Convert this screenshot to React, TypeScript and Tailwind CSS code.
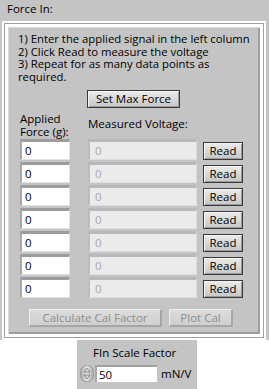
import React from "react";

const font = { fontFamily: '"Open Sans", "Noto Sans", sans-serif' };

function Btn({ label, w, disabled }: { label: string; w: string; disabled?: boolean }) {
  if (disabled) {
    return (
      <div
        className={`${w} h-[18px] flex items-center justify-center text-[11.5px] leading-none text-[#8e8e8e] bg-gradient-to-b from-[#dcdcdc] to-[#cfcfcf] border-t border-l border-[#ececec] border-r-2 border-b-2 border-r-[#a6a6a6] border-b-[#a6a6a6]`}
      >
        {label}
      </div>
    );
  }
  return (
    <div className={`${w} h-[18px] border border-[#3a3a3a] bg-[#3a3a3a]`}>
      <div className="w-full h-full flex items-center justify-center text-[11.5px] leading-none text-black bg-gradient-to-b from-[#ececec] to-[#c6c6c6] shadow-[inset_1px_1px_0_#f6f6f6,inset_-1px_-1px_0_#9a9a9a]">
        {label}
      </div>
    </div>
  );
}

function Row() {
  return (
    <div className="flex items-start h-[23px]">
      <div className="ml-[12px] w-[50px] h-[21px] bg-white border-t-[3px] border-l-[2px] border-t-[#9c9c9c] border-l-[#a8a8a8] border-b border-r border-b-[#e2e2e2] border-r-[#e2e2e2] pl-[3px] text-[11.5px] leading-[17px] text-black">
        0
      </div>
      <div className="ml-[18px] w-[109px] h-[21px] bg-[#ebebeb] border-t-[3px] border-l-[2px] border-t-[#b8b8b8] border-l-[#bcbcbc] border-b border-r border-b-[#dedede] border-r-[#dedede] pl-[5px] text-[11.5px] leading-[17px] text-[#a8a8a8]">
        0
      </div>
      <div className="ml-[6px] mt-[3px]">
        <Btn label="Read" w="w-[40px]" />
      </div>
    </div>
  );
}

export default function App() {
  return (
    <div className="w-[269px] h-[389px] bg-white overflow-hidden text-black" style={font}>
      <div className="h-[21px] bg-[#c4c4c4] pl-[7px] pt-[1px] text-[11.5px] leading-[16px]">Force In:</div>
      <div className="bg-[#c4c4c4] pl-[2px] pr-[3px] h-[319px]">
        <div className="h-full border-2 border-white">
          <div className="h-full border border-[#a0a0a0]">
            <div className="h-full border-[3px] border-white">
              <div className="h-full bg-[#c4c4c4] shadow-[inset_1px_1px_0_#dadada,inset_-2px_-2px_0_#9e9e9e] flex flex-col">
                <div className="pl-[10px] pt-[6px] text-[11.3px] leading-[12.5px] whitespace-nowrap">
                  <div>1) Enter the applied signal in the left column</div>
                  <div>2) Click Read to measure the voltage</div>
                  <div>3) Repeat for as many data points as</div>
                  <div>required.</div>
                </div>
                <div className="ml-[79px] mt-[7px]">
                  <Btn label="Set Max Force" w="w-[93px]" />
                </div>
                <div className="flex h-[27px] mt-[4px] text-[11.5px] leading-[13px]">
                  <div className="ml-[12px] w-[68px]">
                    <div>Applied</div>
                    <div>Force (g):</div>
                  </div>
                  <div className="mt-[5px]">Measured Voltage:</div>
                </div>
                <div className="flex flex-col">
                  {Array.from({ length: 7 }).map((_, i) => (
                    <Row key={i} />
                  ))}
                </div>
                <div className="flex mt-[9px] ml-[21px] gap-[7px]">
                  <Btn label="Calculate Cal Factor" w="w-[133px]" disabled />
                  <Btn label="Plot Cal" w="w-[64px]" disabled />
                </div>
              </div>
            </div>
          </div>
        </div>
      </div>
      <div className="ml-[77px] w-[120px] h-[49px] bg-[#c4c4c4] flex flex-col">
        <div className="pl-[16px] pt-[6px] text-[11.5px] leading-[14px]">FIn Scale Factor</div>
        <div className="flex items-center mt-[5px] pl-[3px]">
          <svg width="14" height="17" viewBox="0 0 14 17">
            <defs>
              <linearGradient id="sg" x1="0" y1="0" x2="1" y2="0">
                <stop offset="0" stopColor="#a8a8a8" />
                <stop offset="0.5" stopColor="#e6e6e6" />
                <stop offset="1" stopColor="#a8a8a8" />
              </linearGradient>
            </defs>
            <rect x="0.5" y="0.5" width="13" height="16" rx="6" fill="url(#sg)" stroke="#9a9a9a" />
            <path d="M7 3 L10 7 L4 7 Z" fill="#d8d8d8" stroke="#7a7a7a" strokeWidth="0.8" />
            <path d="M7 14 L10 10 L4 10 Z" fill="#d8d8d8" stroke="#7a7a7a" strokeWidth="0.8" />
          </svg>
          <div className="ml-[1px] w-[62px] h-[17px] bg-white border-t-[2px] border-l-[2px] border-t-[#a0a0a0] border-l-[#a8a8a8] pl-[2px] text-[11.5px] leading-[15px]">
            50
          </div>
          <div className="ml-[4px] text-[11.5px] leading-[15px]">mN/V</div>
        </div>
      </div>
    </div>
  );
}
